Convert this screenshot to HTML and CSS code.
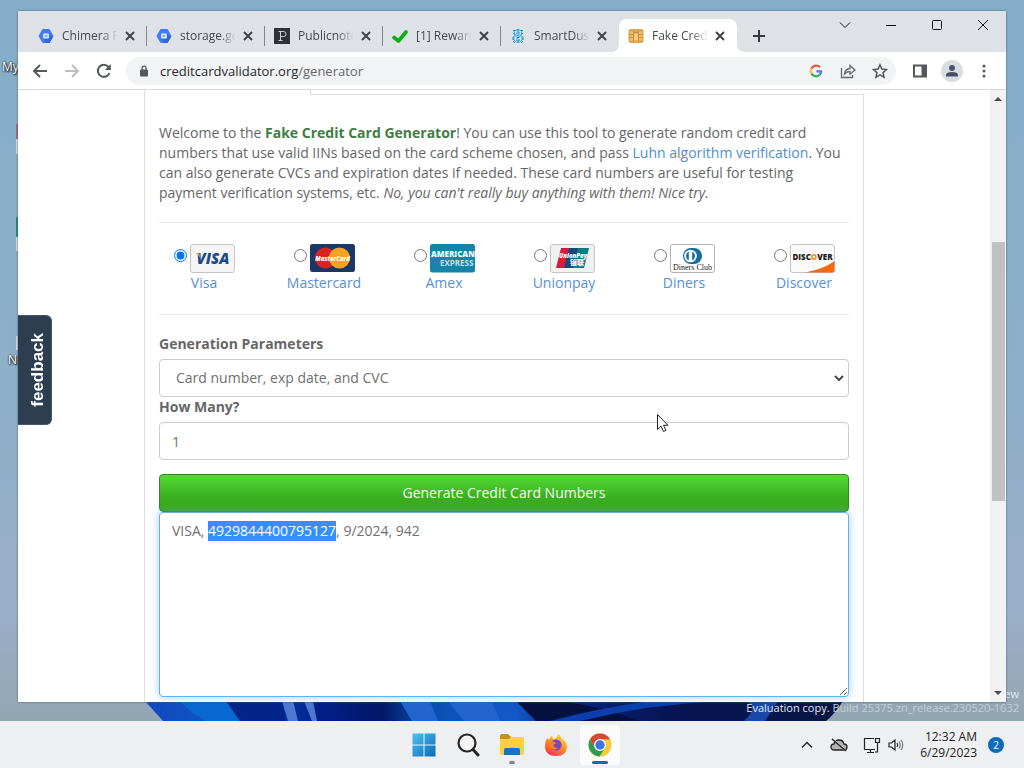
FILE: index.html
```html
<!DOCTYPE html>
<html lang="en">
<head>
<meta charset="utf-8">
<title>Fake Credit Card Generator</title>
<link rel="stylesheet" href="styles.css">
</head>
<body>
<div class="desktop">
  <svg class="wallpaper" viewBox="0 0 1024 721" preserveAspectRatio="none" aria-hidden="true">
    <defs>
      <linearGradient id="sky" x1="0" y1="0" x2="0" y2="1"><stop offset="0" stop-color="#83adc8"/><stop offset=".5" stop-color="#8eafc8"/><stop offset=".85" stop-color="#9aafc9"/><stop offset="1" stop-color="#93a6b3"/></linearGradient>
      <linearGradient id="bloom"><stop offset="0" stop-color="#1249be"/><stop offset=".12" stop-color="#0b58c4"/><stop offset=".25" stop-color="#03208a"/><stop offset=".34" stop-color="#041765"/><stop offset=".4" stop-color="#0751b0"/><stop offset=".53" stop-color="#1458c8"/><stop offset=".6" stop-color="#0a2680"/><stop offset=".75" stop-color="#061553"/><stop offset="1" stop-color="#071642"/></linearGradient>
    </defs>
    <rect width="1024" height="721" fill="url(#sky)"/>
    <path d="M145 701H843Q834 715 826 721H163Z" fill="url(#bloom)"/>
    <path d="M180 701Q190 713 206 721H242L226 701Z" fill="#0868d2"/>
    <path d="M226 701L240 721H286L282 701Z" fill="#03248b"/>
    <path d="M282 701L288 721H298L293 701ZM304 701L312 721H317L313 701Z" fill="#4c78cf"/>
    <path d="M400 701L412 721H438L430 701ZM448 701L464 721H500L492 701Z" fill="#2365cf"/>
    <path d="M516 701L536 721H640Q600 706 560 701Z" fill="#04103f"/>
    <path d="M580 721Q650 704 720 701H650Q600 708 550 721Z" fill="#0b3fae"/>
    <path d="M745 701Q760 706 744 721H765L778 701Z" fill="#1748a8"/>
  </svg>
  <span class="shortcut shortcut-top">My</span>
  <span class="shortcut shortcut-mid">N</span>
  <i class="sliver sliver-a"></i><i class="sliver sliver-b"></i><i class="sliver sliver-c"></i>
  <div class="watermark"><div>ew</div><div>Evaluation copy. <span>Build 25375.zn_release.230520-1632</span></div></div>

  <main class="window">
    <header class="tabstrip">
      <div class="tab">
        <svg class="favicon" viewBox="0 0 16 16"><path d="M4.500 1h7L15.500 8l-4 7h-7L.5 8z" fill="#3f7cf0"/><path d="M10 5l5 4-3.500 6H8L6 11z" fill="#2f66d8"/><rect x="5" y="5.500" width="6" height="5" rx="1" fill="#dce8ff"/><path d="M6.500 7h3v2h-3z" fill="#8cb0f5"/></svg>
        <span class="tab-title">Chimera P</span><button class="tab-close" aria-label="Close tab"><svg viewBox="0 0 10 10"><path d="M1 1l8 8M9 1L1 9"/></svg></button>
      </div>
      <div class="tab">
        <svg class="favicon" viewBox="0 0 16 16"><path d="M4.500 1h7L15.500 8l-4 7h-7L.5 8z" fill="#3f7cf0"/><path d="M10 5l5 4-3.500 6H8L6 11z" fill="#2f66d8"/><rect x="5" y="5.500" width="6" height="5" rx="1" fill="#dce8ff"/><path d="M6.500 7h3v2h-3z" fill="#8cb0f5"/></svg>
        <span class="tab-title">storage.go</span><button class="tab-close" aria-label="Close tab"><svg viewBox="0 0 10 10"><path d="M1 1l8 8M9 1L1 9"/></svg></button>
      </div>
      <div class="tab">
        <svg class="favicon" viewBox="0 0 16 16"><path d="M0 0h16v16H0z" fill="#2e3236"/><path d="M5 3.500h4.500q2.500 0 2.500 2.500t-2.500 2.500H7M6.500 3.500v9M4.500 12.500h4M4.500 3.500h2" fill="none" stroke="#c9cbcc"/></svg>
        <span class="tab-title">Publicnote</span><button class="tab-close" aria-label="Close tab"><svg viewBox="0 0 10 10"><path d="M1 1l8 8M9 1L1 9"/></svg></button>
      </div>
      <div class="tab">
        <svg class="favicon" viewBox="0 0 16 16"><path d="M2 9.500l4.500 3.500L14 4" fill="none" stroke="#0db014" stroke-width="3.600" stroke-linecap="round" stroke-linejoin="round"/></svg>
        <span class="tab-title">[1] Reward</span><button class="tab-close" aria-label="Close tab"><svg viewBox="0 0 10 10"><path d="M1 1l8 8M9 1L1 9"/></svg></button>
      </div>
      <div class="tab tab-last">
        <svg class="favicon" viewBox="0 0 16 16" fill="none"><path d="M4.500 3.500Q8-1 11.500 3.500V7h-7zM4 8h8v4q-4 5-8 0z" fill="#d9effb" stroke="#2fa5e6"/><path d="M3 2.500h2M3 5.500h1M11 2.500h2M12 5.500h1M3 13.500l2 1M13 13.500l-2 1M3 9v3M13 9v3" stroke="#2277c4"/><path d="M6.500 3h3M6 5h4M9.500 9.500H7V13h2v-2" stroke="#1976c8"/></svg>
        <span class="tab-title">SmartDust</span><button class="tab-close" aria-label="Close tab"><svg viewBox="0 0 10 10"><path d="M1 1l8 8M9 1L1 9"/></svg></button>
      </div>
      <div class="tab tab-active">
        <svg class="favicon" viewBox="0 0 16 16"><rect x=".5" y="1" width="15" height="14" rx="2" fill="#dfa652"/><path d="M2 3.500h3v9H2zM11 3.500h3v9h-3z" fill="#eebf72"/><path d="M6 5.500h4v7H6z" fill="#f0cb80"/><path d="M2 6.500h3.500M2 9.500h3.500M10.500 6.500H14M10.500 9.500H14M5.500 3v10M10.500 3v10M5.500 4.500h5" fill="none" stroke="#c48d3e"/></svg>
        <span class="tab-title">Fake Credi</span><button class="tab-close" aria-label="Close tab"><svg viewBox="0 0 10 10"><path d="M1 1l8 8M9 1L1 9"/></svg></button>
      </div>
      <button class="new-tab" aria-label="New tab"><svg width="12" height="12" viewBox="0 0 12 12"><path d="M6 0v12M0 6h12" stroke="#333639" stroke-width="2"/></svg></button>
      <div class="window-controls">
        <button aria-label="Search tabs"><svg viewBox="0 0 12 12"><path d="M1 3.500l5 5 5-5"/></svg></button>
        <button aria-label="Minimize"><svg viewBox="0 0 12 12"><path d="M1 6.500h10"/></svg></button>
        <button aria-label="Maximize"><svg viewBox="0 0 12 12"><rect x="1.500" y="1.500" width="9" height="9" rx="1"/></svg></button>
        <button aria-label="Close"><svg viewBox="0 0 12 12"><path d="M1 1l10 10M11 1L1 11"/></svg></button>
      </div>
    </header>

    <nav class="toolbar">
      <button aria-label="Back"><svg viewBox="0 0 16 16"><path d="M15 8H2M8 2L2 8l6 6" fill="none" stroke="#54585c" stroke-width="2"/></svg></button>
      <button aria-label="Forward"><svg viewBox="0 0 16 16"><path d="M1 8h13M8 2l6 6-6 6" fill="none" stroke="#bcbec1" stroke-width="2"/></svg></button>
      <button aria-label="Reload"><svg viewBox="0 0 16 16"><path d="M13.500 10A6 6 0 1 1 12.500 4" fill="none" stroke="#54585c" stroke-width="2"/><path d="M14.800 1v6h-6z" fill="#54585c"/></svg></button>
      <div class="omnibox">
        <svg class="lock" viewBox="0 0 10 12"><rect x="1" y="4.500" width="8" height="7" rx="1" fill="#54585c"/><path d="M3 5V3.200a2 2 0 0 1 4 0V5" fill="none" stroke="#54585c" stroke-width="1.300"/></svg>
        <span class="url">creditcardvalidator.org<span>/generator</span></span>
        <button aria-label="Search with Google"><svg viewBox="0 0 16 16" fill="none" stroke-width="2.300"><path d="M12 4.300A5.200 5.200 0 0 0 3.500 5.400" stroke="#e2574a"/><path d="M3.500 5.400a5.200 5.200 0 0 0 0 5.200" stroke="#f3bd3b"/><path d="M3.500 10.600A5.200 5.200 0 0 0 11.700 11.800" stroke="#3aa757"/><path d="M11.700 11.800A5 5 0 0 0 13 8.300H8.300" stroke="#4285f4"/></svg></button>
        <button aria-label="Share"><svg viewBox="0 0 16 16" fill="none" stroke="#65696d" stroke-width="1.300"><path d="M1.500 5v9.500h11V12"/><path d="M4.500 11q.5-5 5.500-5.500V2.500L15 7l-5 4.200V8.500q-3.500 0-5.500 2.500z"/></svg></button>
        <button aria-label="Bookmark"><svg viewBox="0 0 16 16"><path d="M8 1.800l1.900 4.300 4.600.5L11 9.600l1 4.700-4-2.500-4 2.500 1-4.700-3.500-3 4.600-.5z" fill="none" stroke="#54585c" stroke-width="1.500"/></svg></button>
      </div>
      <button aria-label="Side panel"><svg viewBox="0 0 16 16"><path d="M1 1.500h14v13H1zM3 3.500v9h6.500v-9z" fill="#54585c" fill-rule="evenodd"/></svg></button>
      <button class="profile" aria-label="Profile"><svg viewBox="0 0 16 16" fill="#4a5064"><circle cx="8" cy="5" r="2.900"/><path d="M2 13.500V12q0-3 6-3t6 3v1.500z"/></svg></button>
      <button aria-label="Menu"><svg viewBox="0 0 16 16" fill="#54585c"><circle cx="8" cy="3" r="1.500"/><circle cx="8" cy="8" r="1.500"/><circle cx="8" cy="13" r="1.500"/></svg></button>
    </nav>

    <div class="viewport">
      <section class="page">
        <div class="container">
          <div class="nav-tabs"><div class="nav-current"></div><div class="nav-rest"></div></div>
          <form class="pane">
            <p class="intro">Welcome to the <strong>Fake Credit Card Generator</strong>! You can use this tool to generate random credit card numbers that use valid IINs based on the card scheme chosen, and pass <a href="#">Luhn algorithm verification</a>. You can also generate CVCs and expiration dates if needed. These card numbers are useful for testing payment verification systems, etc. <em>No, you can't really buy anything with them! Nice try.</em></p>
            <div class="schemes">
              <label class="scheme"><span class="pick"><input type="radio" name="scheme" checked>
                <svg class="card" viewBox="0 0 45 29"><rect x=".5" y=".5" width="44" height="28" rx="2.500" fill="#f5f5f5" stroke="#c4c4c4"/><text x="23" y="20" text-anchor="middle" font-size="15" font-style="italic" font-weight="800" fill="#1d4a8c">VISA</text><path d="M5 9h4l1.500 5Q8 10 5 9z" fill="#e8a33d"/></svg></span>Visa</label>
              <label class="scheme"><span class="pick"><input type="radio" name="scheme">
                <svg class="card" viewBox="0 0 45 29"><rect width="45" height="28" rx="2.500" fill="#193767"/><circle cx="15.500" cy="14" r="10.500" fill="#d8231f"/><circle cx="29.500" cy="14" r="10.500" fill="#f0a325"/><text x="22.500" y="17" text-anchor="middle" font-size="6" font-style="italic" font-weight="800" fill="#fff">MasterCard</text></svg></span>Mastercard</label>
              <label class="scheme"><span class="pick"><input type="radio" name="scheme">
                <svg class="card" viewBox="0 0 45 29"><rect width="45" height="28.500" rx="2.500" fill="#1485a9"/><text x="1" y="13" font-size="8" font-weight="800" fill="#eefaff">AMERICAN</text><text x="10" y="22" font-size="8" font-weight="700" fill="#bfe4ef">EXPRESS</text></svg></span>Amex</label>
              <label class="scheme"><span class="pick"><input type="radio" name="scheme">
                <svg class="card" viewBox="0 0 45 29"><rect x=".5" y=".5" width="44" height="28" rx="2.500" fill="#f1f1f1" stroke="#c4c4c4"/><path d="M11 4h10l-5 20H6z" fill="#d31f3f"/><path d="M19 4h11l-5 20H14z" fill="#14497c"/><path d="M28 4h11l-5 20H23z" fill="#0a7b83"/><text x="23" y="14" text-anchor="middle" font-size="6" font-style="italic" font-weight="800" fill="#fff">UnionPay</text><text x="27" y="21" text-anchor="middle" font-size="7" font-weight="900" fill="#fff" class="cjk">银联</text></svg></span>Unionpay</label>
              <label class="scheme"><span class="pick"><input type="radio" name="scheme">
                <svg class="card" viewBox="0 0 45 29"><rect x=".5" y=".5" width="44" height="28" rx="2.500" fill="#fff" stroke="#b3b3b3"/><path d="M20 4h4a8 8 0 0 1 0 16h-4z" fill="#176e9e"/><circle cx="21" cy="12" r="8" fill="#176e9e"/><circle cx="20.500" cy="12" r="6.300" fill="#fff"/><path d="M18.800 7.500v9a5 5 0 0 1 0-9zM22.200 7.500v9a5 5 0 0 0 0-9z" fill="#176e9e"/><text x="22.500" y="26" text-anchor="middle" font-size="8" fill="#222" class="serif">Diners Club</text></svg></span>Diners</label>
              <label class="scheme"><span class="pick"><input type="radio" name="scheme">
                <svg class="card" viewBox="0 0 45 29"><rect x=".5" y=".5" width="44" height="28" rx="2.500" fill="#fafafa" stroke="#c4c4c4"/><path d="M15 28.500Q34 25 44.500 17v9.500q0 2-2 2z" fill="#f26a12"/><text x="22.500" y="16" text-anchor="middle" font-size="8" font-weight="800" fill="#222">DISC<tspan fill="#f08a1c">O</tspan>VER</text></svg></span>Discover</label>
            </div>
            <label class="field-label" for="params">Generation Parameters</label>
            <div class="select-wrap"><select id="params" class="field"><option>Card number, exp date, and CVC</option></select>
              <svg viewBox="0 0 10 10" aria-hidden="true"><path d="M1 3l4 4 4-4" fill="none" stroke="#484848" stroke-width="2"/></svg></div>
            <label class="field-label" for="count">How Many?</label>
            <input id="count" class="field" type="text" value="1">
            <button class="generate" type="button">Generate Credit Card Numbers</button>
            <textarea id="result" class="field result" aria-label="Generated numbers" spellcheck="false">VISA, 4929844400795127, 9/2024, 942</textarea>
          </form>
        </div>
        <button class="feedback"><span>feedback</span></button>
      </section>
      <div class="scrollbar" aria-hidden="true">
        <svg viewBox="0 0 16 17"><path d="M4 11l4-4 4 4z"/></svg>
        <div class="track-above"></div><div class="thumb"></div><div class="track-below"></div>
        <svg viewBox="0 0 16 17"><path d="M4 6l4 4 4-4z"/></svg>
      </div>
    </div>
  </main>
  <svg class="pointer" viewBox="0 0 13 20" aria-hidden="true"><path d="M1.500 1.500v15l3.500-3.300 2.500 5.300 2.500-1.200-2.500-5h4.500z" fill="#fff" stroke="#222"/></svg>
</div>

<footer class="taskbar">
  <div class="apps">
    <button aria-label="Start"><svg width="24" height="24" viewBox="0 0 24 24"><defs><linearGradient id="win" x2="1" y2="1"><stop stop-color="#4cc2ee"/><stop offset="1" stop-color="#0969bd"/></linearGradient></defs><path d="M.5.5h11v11H.5zM12.500.5h11v11h-11zM.5 12.500h11v11H.5zM12.500 12.500h11v11h-11z" fill="url(#win)"/></svg></button>
    <button aria-label="Search"><svg width="24" height="24" viewBox="0 0 24 24"><circle cx="11" cy="10" r="8.500" fill="#f4f4f4" stroke="#252525" stroke-width="2.200"/><path d="M17 16.500l5 5.500" stroke="#252525" stroke-width="3" stroke-linecap="round"/></svg></button>
    <button class="running" aria-label="File Explorer"><svg width="26" height="24" viewBox="0 0 26 24"><path d="M1 3q0-2 2-2h6l3 3v4H1z" fill="#c69218"/><path d="M1 6h9l2-2h11q2 0 2 2v14q0 2-2 2H3q-2 0-2-2z" fill="#fbcf43"/><path d="M5 22v-5q0-2 2-2h12q2 0 2 2v5z" fill="#1273c4"/></svg></button>
    <button aria-label="Firefox"><svg width="24" height="24" viewBox="0 0 24 24"><defs><linearGradient id="fire" x1=".8" x2=".2" y2="1"><stop stop-color="#ffe03d"/><stop offset=".45" stop-color="#ff9422"/><stop offset="1" stop-color="#ee2c64"/></linearGradient></defs><path d="M14 1q3 2 4 5 4 2 5 7 0 10-11 10T1 13q0-6 3-8l1 2q1-3 3-4l1 3q4 0 5-5z" fill="url(#fire)"/><circle cx="12" cy="12" r="5.500" fill="#7544cf"/><path d="M5 9q4-2 7 1-1 2-3 2 1 3 5 3-4 3-7 0T5 9z" fill="#ff7c29"/></svg></button>
    <button class="running active" aria-label="Chrome"><svg width="24" height="24" viewBox="0 0 24 24"><circle cx="12" cy="12" r="11.500" fill="#f7ca36"/><path d="M2 6.300A11.500 11.500 0 0 1 22 6.300H12L7 15z" fill="#dc4436"/><path d="M2 6.300A11.500 11.500 0 0 0 11.500 23.500L17 15 7 15z" fill="#2d9b50"/><circle cx="12" cy="12" r="6" fill="#fff"/><circle cx="12" cy="12" r="4.700" fill="#3978e4"/></svg></button>
  </div>
  <div class="tray">
    <svg width="12" height="8" viewBox="0 0 12 8"><path d="M1 6.500l5-5 5 5" fill="none" stroke="#2b2b2b" stroke-width="1.500"/></svg>
    <svg class="cloud" width="18" height="14" viewBox="0 0 18 14"><path d="M4.500 12Q1 12 1 9t3-3q1-4 5-4t5 4q3 0 3 3t-3 3z" fill="#b4b4b4" stroke="#222" stroke-width="1.300"/><path d="M3 1l13 12" stroke="#eee" stroke-width="1.500"/><path d="M2 1l14 12" stroke="#222" stroke-width="1.500"/></svg>
    <svg class="monitor" width="18" height="16" viewBox="0 0 18 16" fill="none" stroke="#222" stroke-width="1.200"><path d="M11 1.500H1.500v11H12M4 15.500h7M7.500 12.500v3M12.500 1.500h4v4h-4zM14.500 5.500V15H12"/></svg>
    <svg width="16" height="14" viewBox="0 0 16 14" fill="none" stroke="#222" stroke-width="1.200"><path d="M1 5h2.500L7 2v10L3.500 9H1zM9 5q1.500 2 0 4"/><path d="M11 3.500q2.500 3.500 0 7M13 2q3.500 5 0 10" stroke="#777"/></svg>
    <time class="clock">12:32 AM<br>6/29/2023</time>
    <span class="badge">2</span>
  </div>
</footer>
<script src="script.js"></script>
</body>
</html>
```
FILE: styles.css
```css
* { box-sizing: border-box; }
body { margin: 0; height: 100vh; display: flex; flex-direction: column; overflow: hidden; font-family: "Open Sans", "Noto Sans", sans-serif; font-size: 14px; line-height: 20px; color: #666; }
button { border: 0; padding: 0; background: none; font: inherit; color: inherit; }
svg { display: block; flex: none; }

.desktop { position: relative; flex: 1; min-height: 0; display: flex; padding: 11px 18px 19px; }
.wallpaper { position: absolute; inset: 0; width: 100%; height: 100%; }
.shortcut { position: absolute; font-size: 12px; line-height: 16px; color: #fff; text-shadow: 1px 1px 2px #000, 0 0 2px #000; }
.shortcut-top { left: 2px; top: 59px; }
.shortcut-mid { left: 8px; top: 352px; }
.sliver { position: absolute; left: 16px; width: 2px; background: #d2dde5; }
.sliver-a { top: 124px; height: 30px; background: linear-gradient(#a3667a 50%, #d2dde5 50%); }
.sliver-b { top: 217px; height: 34px; background: linear-gradient(#25896f 60%, #d2dde5 60%); }
.sliver-c { top: 336px; height: 14px; }
.watermark { position: absolute; right: 5px; bottom: 6px; font-size: 11px; line-height: 14px; text-align: right; color: #e4e8ee; }
.watermark span { color: #c5ced8; }

.window { position: relative; flex: 1; min-width: 0; display: flex; flex-direction: column; background: #fff; box-shadow: 0 0 2px #46606f; overflow: hidden; }
.tabstrip { display: flex; height: 41px; padding-left: 11px; background: #dee1e6; color: #45484c; flex: none; }
.tab { position: relative; flex: 0 1 118px; min-width: 0; display: flex; align-items: center; margin-top: 8px; padding-left: 9px; font-size: 12px; line-height: 16px; }
.tab:not(.tab-last, .tab-active)::after { content: ""; position: absolute; right: 0; top: 7px; height: 20px; width: 1px; background: #84888d; }
.favicon { width: 16px; height: 16px; }
.tab-title { flex: 1; min-width: 0; margin-left: 8px; overflow: hidden; white-space: nowrap; -webkit-mask-image: linear-gradient(90deg, #000 70%, transparent); mask-image: linear-gradient(90deg, #000 70%, transparent); }
.tab-close { width: 16px; height: 16px; display: grid; place-items: center; margin: 0 9px 0 4px; }
.tab-close svg { width: 10px; height: 10px; stroke: #3f4347; stroke-width: 2; }
.tab-active { background: #fff; border-radius: 8px 8px 0 0; }
.tab-active::before { content: ""; position: absolute; left: -8px; right: -8px; bottom: 0; height: 8px; background: radial-gradient(circle at 0 0, transparent 8px, #fff 8px) left / 8px 8px no-repeat, radial-gradient(circle at 100% 0, transparent 8px, #fff 8px) right / 8px 8px no-repeat; }
.new-tab { margin: 8px 0 0 16px; }
.window-controls { display: flex; margin-left: auto; height: 28px; }
.window-controls button { width: 46px; display: grid; place-items: center; }
.window-controls svg { width: 12px; height: 12px; fill: none; stroke: #111; }

.toolbar { flex: none; display: flex; align-items: center; height: 38px; padding: 0 6px; border-bottom: 1px solid #d9dadc; }
.toolbar button { width: 32px; height: 28px; display: grid; place-items: center; }
.toolbar svg { width: 16px; height: 16px; }
.omnibox { flex: 1; display: flex; align-items: center; height: 28px; margin: 0 8px 0 6px; padding-left: 13px; background: #f1f3f4; border-radius: 14px; }
.toolbar .lock { width: 10px; height: 12px; }
.url { flex: 1; margin-left: 11px; font-size: 13px; color: #27292c; }
.url span { color: #65696d; }
.toolbar .profile { width: 22px; height: 22px; margin: 0 5px; border-radius: 50%; background: #dadce3; }

.viewport { flex: 1; min-height: 0; display: flex; }
.page { position: relative; flex: 1; min-width: 0; overflow: hidden; }
.container { max-width: 720px; margin: 0 auto; }
.nav-tabs { display: flex; height: 5px; }
.nav-current { width: 167px; border: solid #ddd; border-width: 0 1px; }
.nav-rest { flex: 1; border-bottom: 1px solid #ddd; }
.pane { border: solid #ddd; border-width: 0 1px; padding: 28px 14px 15px; }
.intro { margin: 0; }
.intro strong { color: #3f7d42; }
.intro a { color: #4b8ed6; text-decoration: none; }
.schemes { position: relative; display: grid; grid-template-columns: repeat(6, 1fr); margin: 19px -15px; padding: 22px 0; }
.schemes::before, .schemes::after { content: ""; position: absolute; left: 15px; right: 15px; height: 1px; background: #e8e8e8; }
.schemes::before { top: 0; }
.schemes::after { bottom: 0; }
.scheme { display: flex; flex-direction: column; align-items: center; color: #5790d4; min-width: 0; }
.pick { display: flex; gap: 3px; }
.pick input { width: 13px; height: 13px; margin: 5px 0 0; accent-color: #0075ff; }
.card { width: 45px; height: 29px; }
.cjk { font-family: "Noto Sans CJK SC", sans-serif; }
.serif { font-family: "Liberation Serif", serif; }
.field-label { display: block; margin-bottom: 5px; font-weight: 700; }
.field { display: block; width: 100%; height: 38px; padding: 8px 12px; border: 1px solid #ccc; border-radius: 4px; background: #fff; color: #707070; font: inherit; }
.select-wrap { position: relative; }
.select-wrap select { appearance: none; padding-left: 16px; }
.select-wrap svg { position: absolute; right: 5px; top: 14px; width: 10px; height: 10px; pointer-events: none; }
.generate { display: block; width: 100%; height: 38px; margin-top: 14px; border: 1px solid #2e8a1c; border-radius: 4px; background: linear-gradient(#56d935, #3bb021 60%, #37a81c); color: #f3fbf0; }
.result { height: 185px; resize: vertical; border-color: #66afe9; box-shadow: 0 0 8px rgba(102, 175, 233, .6); outline: 0; caret-color: transparent; }
.result::selection { background: rgba(51, 143, 255, .99); color: #fff; }
.feedback { position: absolute; left: 0; top: 225px; width: 34px; height: 110px; display: grid; place-items: center; padding-left: 7px; background: #2d3e50; border-radius: 0 6px 6px 0; border: 1px solid #46566a; border-left: 0; color: #fff; font: bold 17px/20px "Liberation Sans", Arial, sans-serif; }
.feedback span { writing-mode: vertical-rl; transform: rotate(180deg); }

.scrollbar { flex: none; width: 16px; display: flex; flex-direction: column; align-items: center; background: #f2f2f2; }
.scrollbar svg { width: 16px; height: 17px; fill: #4c4c4c; }
.track-above { flex: 135; }
.thumb { flex: 259; width: 13px; background: #c1c1c1; }
.track-below { flex: 184; }
.pointer { position: absolute; left: 656px; top: 413px; width: 13px; height: 20px; }

.taskbar { flex: none; display: grid; grid-template-columns: 1fr auto 1fr; align-items: center; height: 47px; background: #eeeff1; color: #222; }
.apps { grid-column: 2; display: flex; gap: 4px; }
.apps button { position: relative; width: 40px; height: 40px; display: grid; place-items: center; border-radius: 4px; }
.apps .active { background: #fbfbfb; }
.running::after { content: ""; position: absolute; left: 17px; bottom: 1px; width: 6px; height: 3px; border-radius: 2px; background: #85888b; }
.apps .active::after { left: 12px; width: 16px; background: #1567c0; }
.tray { display: flex; align-items: center; justify-content: flex-end; padding-right: 20px; }
.cloud { margin-left: 17px; }
.monitor { margin: 0 7px 0 15px; }
.clock { margin: 0 11px 0 16px; font-size: 12px; line-height: 16px; text-align: right; }
.badge { width: 16px; height: 16px; border-radius: 50%; background: #0f6cbd; color: #fff; font-size: 10px; line-height: 16px; text-align: center; }
```
FILE: script.js
```js
const result = document.getElementById("result");
const number = result.value.match(/\d{16}/);
result.focus({ preventScroll: true });
result.setSelectionRange(number.index, number.index + number[0].length);
```
